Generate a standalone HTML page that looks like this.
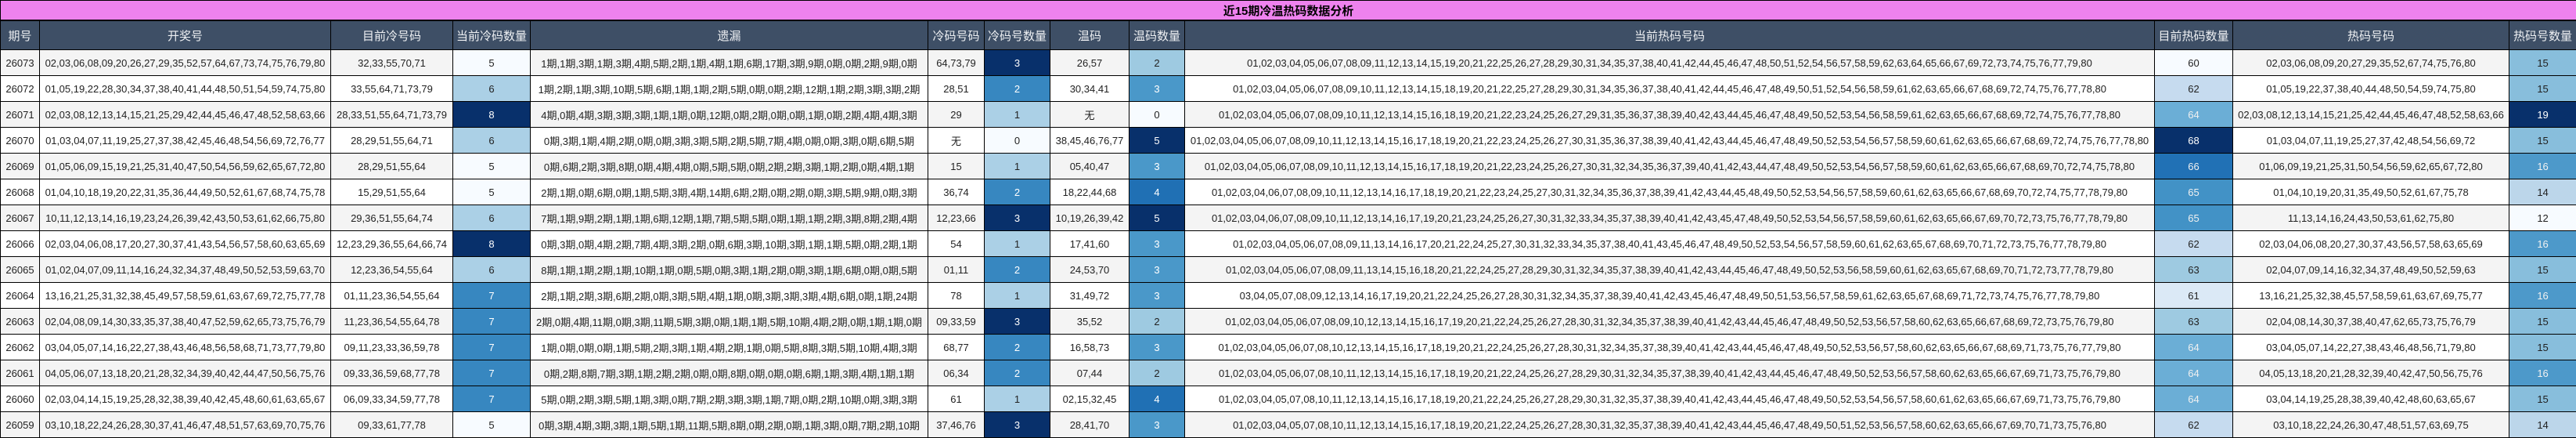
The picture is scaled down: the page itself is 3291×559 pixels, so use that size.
<!DOCTYPE html>
<html><head><meta charset="utf-8">
<style>
html,body{margin:0;padding:0;background:#fff;}
body{width:3291px;height:557px;overflow:hidden;font-family:"Liberation Sans","Noto Sans CJK SC",sans-serif;}
table{border-collapse:collapse;table-layout:fixed;width:3291px;}
td,th{border:1px solid #000;padding:0;text-align:center;white-space:nowrap;overflow:hidden;font-size:13px;color:#222;}
th{background:#3e4f66;color:#eef0f3;font-weight:normal;font-size:15px;height:36px;}
.title td{background:#ee82ee;height:24px;font-weight:bold;font-size:15px;color:#000;border-bottom:2px solid #000;}
tbody tr td{height:32px;}
tr.o td{background:#f4f4f4;}
tr.e td{background:#fff;}
tr td.c0{background:#f7fbff;color:#222}
tr td.c1{background:#abd0e6;color:#222}
tr td.c2{background:#3787c0;color:#fff}
tr td.c3{background:#08306b;color:#fff}
tr td.w2{background:#9ecae1;color:#222}
tr td.w3{background:#4a98c9;color:#fff}
tr td.w4{background:#2070b4;color:#fff}
tr td.h60{background:#f7fbff;color:#222}
tr td.h61{background:#dbe9f6;color:#222}
tr td.h62{background:#c6dbef;color:#222}
tr td.h63{background:#9ecae1;color:#222}
tr td.h64{background:#6baed6;color:#f0f0f0}
tr td.h65{background:#4292c6;color:#f0f0f0}
tr td.h66{background:#2171b5;color:#f0f0f0}
tr td.h68{background:#08306b;color:#fff}
tr td.n12{background:#f7fbff;color:#222}
tr td.n14{background:#bcd6ea;color:#222}
tr td.n15{background:#88bedc;color:#222}
tr td.n16{background:#4d99ca;color:#f0f0f0}
tr td.n19{background:#08306b;color:#fff}
</style></head><body>
<table>
<colgroup>
<col style="width:50px"><col style="width:372px"><col style="width:156px"><col style="width:99px"><col style="width:508px"><col style="width:72px"><col style="width:84px"><col style="width:101px"><col style="width:71px"><col style="width:1239px"><col style="width:100px"><col style="width:353px"><col style="width:86px">
</colgroup>
<tr class="title"><td colspan="13">近15期冷温热码数据分析</td></tr>
<tr><th>期号</th><th>开奖号</th><th>目前冷号码</th><th>当前冷码数量</th><th>遗漏</th><th>冷码号码</th><th>冷码号数量</th><th>温码</th><th>温码数量</th><th>当前热码号码</th><th>目前热码数量</th><th>热码号码</th><th>热码号数量</th></tr>
<tbody>
<tr class="o"><td>26073</td><td>02,03,06,08,09,20,26,27,29,35,52,57,64,67,73,74,75,76,79,80</td><td>32,33,55,70,71</td><td class="c0">5</td><td>1期,1期,3期,1期,3期,4期,5期,2期,1期,4期,1期,6期,17期,3期,9期,0期,0期,2期,9期,0期</td><td>64,73,79</td><td class="c3">3</td><td>26,57</td><td class="w2">2</td><td>01,02,03,04,05,06,07,08,09,11,12,13,14,15,19,20,21,22,25,26,27,28,29,30,31,34,35,37,38,40,41,42,44,45,46,47,48,50,51,52,54,56,57,58,59,62,63,64,65,66,67,69,72,73,74,75,76,77,79,80</td><td class="h60">60</td><td>02,03,06,08,09,20,27,29,35,52,67,74,75,76,80</td><td class="n15">15</td></tr>
<tr class="e"><td>26072</td><td>01,05,19,22,28,30,34,37,38,40,41,44,48,50,51,54,59,74,75,80</td><td>33,55,64,71,73,79</td><td class="c1">6</td><td>1期,2期,1期,3期,10期,5期,6期,1期,1期,2期,5期,0期,0期,2期,12期,1期,2期,3期,3期,2期</td><td>28,51</td><td class="c2">2</td><td>30,34,41</td><td class="w3">3</td><td>01,02,03,04,05,06,07,08,09,10,11,12,13,14,15,18,19,20,21,22,25,27,28,29,30,31,34,35,36,37,38,40,41,42,44,45,46,47,48,49,50,51,52,54,56,58,59,61,62,63,65,66,67,68,69,72,74,75,76,77,78,80</td><td class="h62">62</td><td>01,05,19,22,37,38,40,44,48,50,54,59,74,75,80</td><td class="n15">15</td></tr>
<tr class="o"><td>26071</td><td>02,03,08,12,13,14,15,21,25,29,42,44,45,46,47,48,52,58,63,66</td><td>28,33,51,55,64,71,73,79</td><td class="c3">8</td><td>4期,0期,4期,3期,3期,3期,1期,1期,0期,12期,0期,2期,0期,0期,1期,0期,2期,4期,4期,3期</td><td>29</td><td class="c1">1</td><td>无</td><td class="c0">0</td><td>01,02,03,04,05,06,07,08,09,10,11,12,13,14,15,16,18,19,20,21,22,23,24,25,26,27,29,31,35,36,37,38,39,40,42,43,44,45,46,47,48,49,50,52,53,54,56,58,59,61,62,63,65,66,67,68,69,72,74,75,76,77,78,80</td><td class="h64">64</td><td>02,03,08,12,13,14,15,21,25,42,44,45,46,47,48,52,58,63,66</td><td class="n19">19</td></tr>
<tr class="e"><td>26070</td><td>01,03,04,07,11,19,25,27,37,38,42,45,46,48,54,56,69,72,76,77</td><td>28,29,51,55,64,71</td><td class="c1">6</td><td>0期,3期,1期,4期,2期,0期,0期,3期,3期,5期,2期,5期,7期,4期,0期,0期,3期,0期,6期,5期</td><td>无</td><td class="c0">0</td><td>38,45,46,76,77</td><td class="c3">5</td><td>01,02,03,04,05,06,07,08,09,10,11,12,13,14,15,16,17,18,19,20,21,22,23,24,25,26,27,30,31,35,36,37,38,39,40,41,42,43,44,45,46,47,48,49,50,52,53,54,56,57,58,59,60,61,62,63,65,66,67,68,69,72,74,75,76,77,78,80</td><td class="h68">68</td><td>01,03,04,07,11,19,25,27,37,42,48,54,56,69,72</td><td class="n15">15</td></tr>
<tr class="o"><td>26069</td><td>01,05,06,09,15,19,21,25,31,40,47,50,54,56,59,62,65,67,72,80</td><td>28,29,51,55,64</td><td class="c0">5</td><td>0期,6期,2期,3期,8期,0期,4期,4期,0期,5期,5期,0期,2期,2期,3期,1期,2期,0期,4期,1期</td><td>15</td><td class="c1">1</td><td>05,40,47</td><td class="w3">3</td><td>01,02,03,04,05,06,07,08,09,10,11,12,13,14,15,16,17,18,19,20,21,22,23,24,25,26,27,30,31,32,34,35,36,37,39,40,41,42,43,44,47,48,49,50,52,53,54,56,57,58,59,60,61,62,63,65,66,67,68,69,70,72,74,75,78,80</td><td class="h66">66</td><td>01,06,09,19,21,25,31,50,54,56,59,62,65,67,72,80</td><td class="n16">16</td></tr>
<tr class="e"><td>26068</td><td>01,04,10,18,19,20,22,31,35,36,44,49,50,52,61,67,68,74,75,78</td><td>15,29,51,55,64</td><td class="c0">5</td><td>2期,1期,0期,6期,0期,1期,5期,3期,4期,14期,6期,2期,0期,2期,0期,3期,5期,9期,0期,3期</td><td>36,74</td><td class="c2">2</td><td>18,22,44,68</td><td class="w4">4</td><td>01,02,03,04,06,07,08,09,10,11,12,13,14,16,17,18,19,20,21,22,23,24,25,27,30,31,32,34,35,36,37,38,39,41,42,43,44,45,48,49,50,52,53,54,56,57,58,59,60,61,62,63,65,66,67,68,69,70,72,74,75,77,78,79,80</td><td class="h65">65</td><td>01,04,10,19,20,31,35,49,50,52,61,67,75,78</td><td class="n14">14</td></tr>
<tr class="o"><td>26067</td><td>10,11,12,13,14,16,19,23,24,26,39,42,43,50,53,61,62,66,75,80</td><td>29,36,51,55,64,74</td><td class="c1">6</td><td>7期,1期,9期,2期,1期,1期,6期,12期,1期,7期,5期,5期,0期,1期,1期,2期,3期,8期,2期,4期</td><td>12,23,66</td><td class="c3">3</td><td>10,19,26,39,42</td><td class="c3">5</td><td>01,02,03,04,06,07,08,09,10,11,12,13,14,16,17,19,20,21,23,24,25,26,27,30,31,32,33,34,35,37,38,39,40,41,42,43,45,47,48,49,50,52,53,54,56,57,58,59,60,61,62,63,65,66,67,69,70,72,73,75,76,77,78,79,80</td><td class="h65">65</td><td>11,13,14,16,24,43,50,53,61,62,75,80</td><td class="n12">12</td></tr>
<tr class="e"><td>26066</td><td>02,03,04,06,08,17,20,27,30,37,41,43,54,56,57,58,60,63,65,69</td><td>12,23,29,36,55,64,66,74</td><td class="c3">8</td><td>0期,3期,0期,4期,2期,7期,4期,3期,2期,0期,6期,3期,10期,3期,1期,1期,5期,0期,2期,1期</td><td>54</td><td class="c1">1</td><td>17,41,60</td><td class="w3">3</td><td>01,02,03,04,05,06,07,08,09,11,13,14,16,17,20,21,22,24,25,27,30,31,32,33,34,35,37,38,40,41,43,45,46,47,48,49,50,52,53,54,56,57,58,59,60,61,62,63,65,67,68,69,70,71,72,73,75,76,77,78,79,80</td><td class="h62">62</td><td>02,03,04,06,08,20,27,30,37,43,56,57,58,63,65,69</td><td class="n16">16</td></tr>
<tr class="o"><td>26065</td><td>01,02,04,07,09,11,14,16,24,32,34,37,48,49,50,52,53,59,63,70</td><td>12,23,36,54,55,64</td><td class="c1">6</td><td>8期,1期,1期,2期,1期,10期,1期,0期,5期,0期,3期,1期,2期,0期,3期,1期,6期,0期,0期,5期</td><td>01,11</td><td class="c2">2</td><td>24,53,70</td><td class="w3">3</td><td>01,02,03,04,05,06,07,08,09,11,13,14,15,16,18,20,21,22,24,25,27,28,29,30,31,32,34,35,37,38,39,40,41,42,43,44,45,46,47,48,49,50,52,53,56,58,59,60,61,62,63,65,67,68,69,70,71,72,73,77,78,79,80</td><td class="h63">63</td><td>02,04,07,09,14,16,32,34,37,48,49,50,52,59,63</td><td class="n15">15</td></tr>
<tr class="e"><td>26064</td><td>13,16,21,25,31,32,38,45,49,57,58,59,61,63,67,69,72,75,77,78</td><td>01,11,23,36,54,55,64</td><td class="c2">7</td><td>2期,1期,2期,3期,6期,2期,0期,3期,5期,4期,1期,0期,3期,3期,3期,4期,6期,0期,1期,24期</td><td>78</td><td class="c1">1</td><td>31,49,72</td><td class="w3">3</td><td>03,04,05,07,08,09,12,13,14,16,17,19,20,21,22,24,25,26,27,28,30,31,32,34,35,37,38,39,40,41,42,43,45,46,47,48,49,50,51,53,56,57,58,59,61,62,63,65,67,68,69,71,72,73,74,75,76,77,78,79,80</td><td class="h61">61</td><td>13,16,21,25,32,38,45,57,58,59,61,63,67,69,75,77</td><td class="n16">16</td></tr>
<tr class="o"><td>26063</td><td>02,04,08,09,14,30,33,35,37,38,40,47,52,59,62,65,73,75,76,79</td><td>11,23,36,54,55,64,78</td><td class="c2">7</td><td>2期,0期,4期,11期,0期,3期,11期,5期,3期,0期,1期,1期,5期,10期,4期,2期,0期,1期,1期,0期</td><td>09,33,59</td><td class="c3">3</td><td>35,52</td><td class="w2">2</td><td>01,02,03,04,05,06,07,08,09,10,12,13,14,15,16,17,19,20,21,22,24,25,26,27,28,30,31,32,34,35,37,38,39,40,41,42,43,44,45,46,47,48,49,50,52,53,56,57,58,60,62,63,65,66,67,68,69,72,73,75,76,79,80</td><td class="h63">63</td><td>02,04,08,14,30,37,38,40,47,62,65,73,75,76,79</td><td class="n15">15</td></tr>
<tr class="e"><td>26062</td><td>03,04,05,07,14,16,22,27,38,43,46,48,56,58,68,71,73,77,79,80</td><td>09,11,23,33,36,59,78</td><td class="c2">7</td><td>1期,0期,0期,0期,1期,5期,2期,3期,1期,4期,2期,1期,0期,5期,8期,3期,5期,10期,4期,3期</td><td>68,77</td><td class="c2">2</td><td>16,58,73</td><td class="w3">3</td><td>01,02,03,04,05,06,07,08,10,12,13,14,15,16,17,18,19,20,21,22,24,25,26,27,28,30,31,32,34,35,37,38,39,40,41,42,43,44,45,46,47,48,49,50,52,53,56,57,58,60,62,63,65,66,67,68,69,71,73,75,76,77,79,80</td><td class="h64">64</td><td>03,04,05,07,14,22,27,38,43,46,48,56,71,79,80</td><td class="n15">15</td></tr>
<tr class="o"><td>26061</td><td>04,05,06,07,13,18,20,21,28,32,34,39,40,42,44,47,50,56,75,76</td><td>09,33,36,59,68,77,78</td><td class="c2">7</td><td>0期,2期,8期,7期,3期,1期,2期,2期,0期,0期,8期,0期,0期,0期,6期,1期,3期,4期,1期,1期</td><td>06,34</td><td class="c2">2</td><td>07,44</td><td class="w2">2</td><td>01,02,03,04,05,06,07,08,10,11,12,13,14,15,16,17,18,19,20,21,22,24,25,26,27,28,29,30,31,32,34,35,37,38,39,40,41,42,43,44,45,46,47,48,49,50,52,53,56,57,58,60,62,63,65,66,67,69,71,73,75,76,79,80</td><td class="h64">64</td><td>04,05,13,18,20,21,28,32,39,40,42,47,50,56,75,76</td><td class="n16">16</td></tr>
<tr class="e"><td>26060</td><td>02,03,04,14,15,19,25,28,32,38,39,40,42,45,48,60,61,63,65,67</td><td>06,09,33,34,59,77,78</td><td class="c2">7</td><td>5期,0期,2期,3期,5期,1期,3期,0期,7期,2期,3期,3期,1期,7期,0期,2期,10期,0期,3期,3期</td><td>61</td><td class="c1">1</td><td>02,15,32,45</td><td class="w4">4</td><td>01,02,03,04,05,07,08,10,11,12,13,14,15,16,17,18,19,20,21,22,24,25,26,27,28,29,30,31,32,35,37,38,39,40,41,42,43,44,45,46,47,48,49,50,52,53,54,56,57,58,60,61,62,63,65,66,67,69,71,73,75,76,79,80</td><td class="h64">64</td><td>03,04,14,19,25,28,38,39,40,42,48,60,63,65,67</td><td class="n15">15</td></tr>
<tr class="o"><td>26059</td><td>03,10,18,22,24,26,28,30,37,41,46,47,48,51,57,63,69,70,75,76</td><td>09,33,61,77,78</td><td class="c0">5</td><td>0期,3期,4期,3期,3期,1期,5期,1期,11期,5期,8期,0期,2期,0期,1期,3期,0期,7期,2期,10期</td><td>37,46,76</td><td class="c3">3</td><td>28,41,70</td><td class="w3">3</td><td>01,02,03,04,05,07,08,10,11,12,13,14,15,16,17,18,19,20,21,22,24,25,26,27,28,30,31,32,35,37,38,39,40,41,42,43,44,45,46,47,48,49,50,51,52,53,56,57,58,60,62,63,65,66,67,69,70,71,73,75,76,80</td><td class="h62">62</td><td>03,10,18,22,24,26,30,47,48,51,57,63,69,75</td><td class="n14">14</td></tr>
</tbody>
</table>
</body></html>
